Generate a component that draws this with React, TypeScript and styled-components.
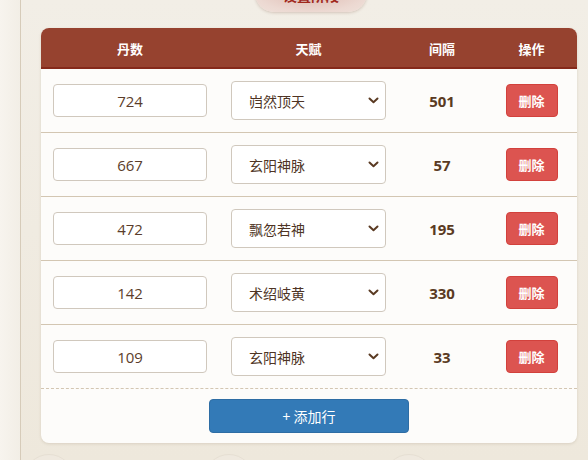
import { useState } from "react";
import styled, { createGlobalStyle } from "styled-components";

const GlobalStyle = createGlobalStyle`
  html, body {
    margin: 0;
    padding: 0;
    height: 460px;
    overflow: hidden;
    background: #f1ece2;
    font-family: "Open Sans", "Noto Sans CJK SC", sans-serif;
  }
`;

type Row = { id: number; pills: string; talent: string; interval: number };

const talents = ["岿然顶天", "玄阳神脉", "飘忽若神", "术绍岐黄"];

const initialRows: Row[] = [
  { id: 1, pills: "724", talent: "岿然顶天", interval: 501 },
  { id: 2, pills: "667", talent: "玄阳神脉", interval: 57 },
  { id: 3, pills: "472", talent: "飘忽若神", interval: 195 },
  { id: 4, pills: "142", talent: "术绍岐黄", interval: 330 },
  { id: 5, pills: "109", talent: "玄阳神脉", interval: 33 },
];

// Styled components
const Page = styled.div`
  display: flex;
  height: 460px;
  overflow: hidden;
`;

const SideStrip = styled.div`
  width: 20px;
  flex: none;
  background: linear-gradient(90deg, #f7f4ee, #f2eee6);
  border-right: 1px solid #d6cbb9;
`;

const Main = styled.div`
  flex: 1;
  display: flex;
  flex-direction: column;
  align-items: stretch;
  padding: 0 11px 0 20px;
  background: linear-gradient(180deg, #f2eee6 0%, #eee8dc 100%);
  & > * {
    flex-shrink: 0;
  }
`;

const TabPill = styled.div`
  align-self: center;
  margin: -26px 0 16px 4px;
  box-sizing: border-box;
  width: 112px;
  height: 38px;
  padding-top: 3px;
  border-radius: 19px;
  background: radial-gradient(ellipse at center, #ddb9b0 0%, #ecd9d2 70%, #efe1da 100%);
  box-shadow: 0 1px 3px rgba(120, 70, 50, 0.25);
  color: #a0281c;
  font-family: "Noto Sans CJK SC", sans-serif;
  font-size: 14px;
  font-weight: bold;
  display: flex;
  align-items: center;
  justify-content: center;
`;

const Card = styled.div`
  background: #fdfcfa;
  border-radius: 8px;
  box-shadow: 0 1px 3px rgba(120, 100, 70, 0.18);
  overflow: hidden;
`;

const GRID = "178px 179px 88px 1fr";

const HeaderRow = styled.div`
  display: grid;
  grid-template-columns: ${GRID};
  height: 39px;
  align-items: center;
  background: #96422f;
  border-bottom: 2px solid #85291a;
`;

const HeaderCell = styled.div`
  color: #fff;
  font-size: 13px;
  font-weight: bold;
  text-align: center;
  padding-top: 1px;
`;

const BodyRow = styled.div<{ $last?: boolean }>`
  display: grid;
  grid-template-columns: ${GRID};
  height: 63px;
  align-items: center;
  border-bottom: 1px ${(p) => (p.$last ? "dashed" : "solid")} #d3c6b2;
`;

const Cell = styled.div`
  padding: 0 12px;
  display: flex;
  justify-content: center;
  align-items: center;
`;

const PillInput = styled.input`
  box-sizing: border-box;
  width: 154px;
  height: 33px;
  border: 1px solid #d0c8bd;
  border-radius: 4px;
  background: #fff;
  text-align: center;
  font-family: "Open Sans", "Noto Sans CJK SC", sans-serif;
  font-size: 15px;
  color: #5b3d2b;
  outline: none;
`;

const SelectWrap = styled.div`
  position: relative;
  width: 155px;
  height: 39px;
`;

const TalentSelect = styled.select`
  appearance: none;
  box-sizing: border-box;
  width: 100%;
  height: 100%;
  border: 1px solid #d0c8bd;
  border-radius: 4px;
  background: #fff;
  padding: 0 24px 0 17px;
  font-family: "Noto Sans CJK SC", sans-serif;
  font-size: 14px;
  color: #4e3424;
  outline: none;
`;

const Chevron = styled.svg`
  position: absolute;
  right: 7px;
  top: 16px;
  pointer-events: none;
`;

const Interval = styled.div`
  text-align: center;
  font-size: 15px;
  font-weight: bold;
  color: #5a3a22;
`;

const DeleteButton = styled.button`
  width: 52px;
  height: 33px;
  border: 1px solid #d2413c;
  border-radius: 4px;
  background: #dc5450;
  color: #fff;
  font-family: "Noto Sans CJK SC", sans-serif;
  font-size: 13px;
  font-weight: bold;
  padding: 0;
  cursor: pointer;
`;

const Footer = styled.div`
  display: flex;
  justify-content: center;
  padding: 10px 0 10px;
`;

const AddButton = styled.button`
  width: 200px;
  height: 34px;
  border: 1px solid #2e6da4;
  border-radius: 4px;
  background: #337ab7;
  color: #fff;
  font-family: "Noto Sans CJK SC", sans-serif;
  font-size: 14px;
  cursor: pointer;
`;

const BubbleRow = styled.div`
  display: flex;
  gap: 130px;
  padding-top: 11px;
  margin-left: -17px;
`;

const Bubble = styled.div`
  width: 48px;
  height: 48px;
  border-radius: 50%;
  border: 1px solid #e6dfd3;
  background: #efe9df;
`;

export default function App() {
  const [rows, setRows] = useState<Row[]>(initialRows);

  const update = (id: number, patch: Partial<Row>) =>
    setRows((prev) => prev.map((r) => (r.id === id ? { ...r, ...patch } : r)));

  const remove = (id: number) => setRows((prev) => prev.filter((r) => r.id !== id));

  const add = () =>
    setRows((prev) => [
      ...prev,
      { id: Date.now(), pills: "0", talent: talents[0], interval: 0 },
    ]);

  return (
    <>
      <GlobalStyle />
      <Page>
        <SideStrip />
        <Main>
          <TabPill>设置阶段</TabPill>
          <Card>
            <HeaderRow>
              <HeaderCell>丹数</HeaderCell>
              <HeaderCell>天赋</HeaderCell>
              <HeaderCell>间隔</HeaderCell>
              <HeaderCell>操作</HeaderCell>
            </HeaderRow>
            {rows.map((row, i) => (
              <BodyRow key={row.id} $last={i === rows.length - 1}>
                <Cell>
                  <PillInput
                    value={row.pills}
                    onChange={(e) => update(row.id, { pills: e.target.value })}
                  />
                </Cell>
                <Cell>
                  <SelectWrap>
                    <TalentSelect
                      value={row.talent}
                      onChange={(e) => update(row.id, { talent: e.target.value })}
                    >
                      {talents.map((t) => (
                        <option key={t} value={t}>
                          {t}
                        </option>
                      ))}
                    </TalentSelect>
                    <Chevron width="11" height="7" viewBox="0 0 11 7">
                      <path
                        d="M1.5 1.5 L5.5 5.2 L9.5 1.5"
                        fill="none"
                        stroke="#5a3a22"
                        strokeWidth="2"
                        strokeLinecap="round"
                        strokeLinejoin="round"
                      />
                    </Chevron>
                  </SelectWrap>
                </Cell>
                <Interval>{row.interval}</Interval>
                <Cell>
                  <DeleteButton onClick={() => remove(row.id)}>删除</DeleteButton>
                </Cell>
              </BodyRow>
            ))}
            <Footer>
              <AddButton onClick={add}>+ 添加行</AddButton>
            </Footer>
          </Card>
          <BubbleRow>
            <Bubble />
            <Bubble />
            <Bubble />
          </BubbleRow>
        </Main>
      </Page>
    </>
  );
}
